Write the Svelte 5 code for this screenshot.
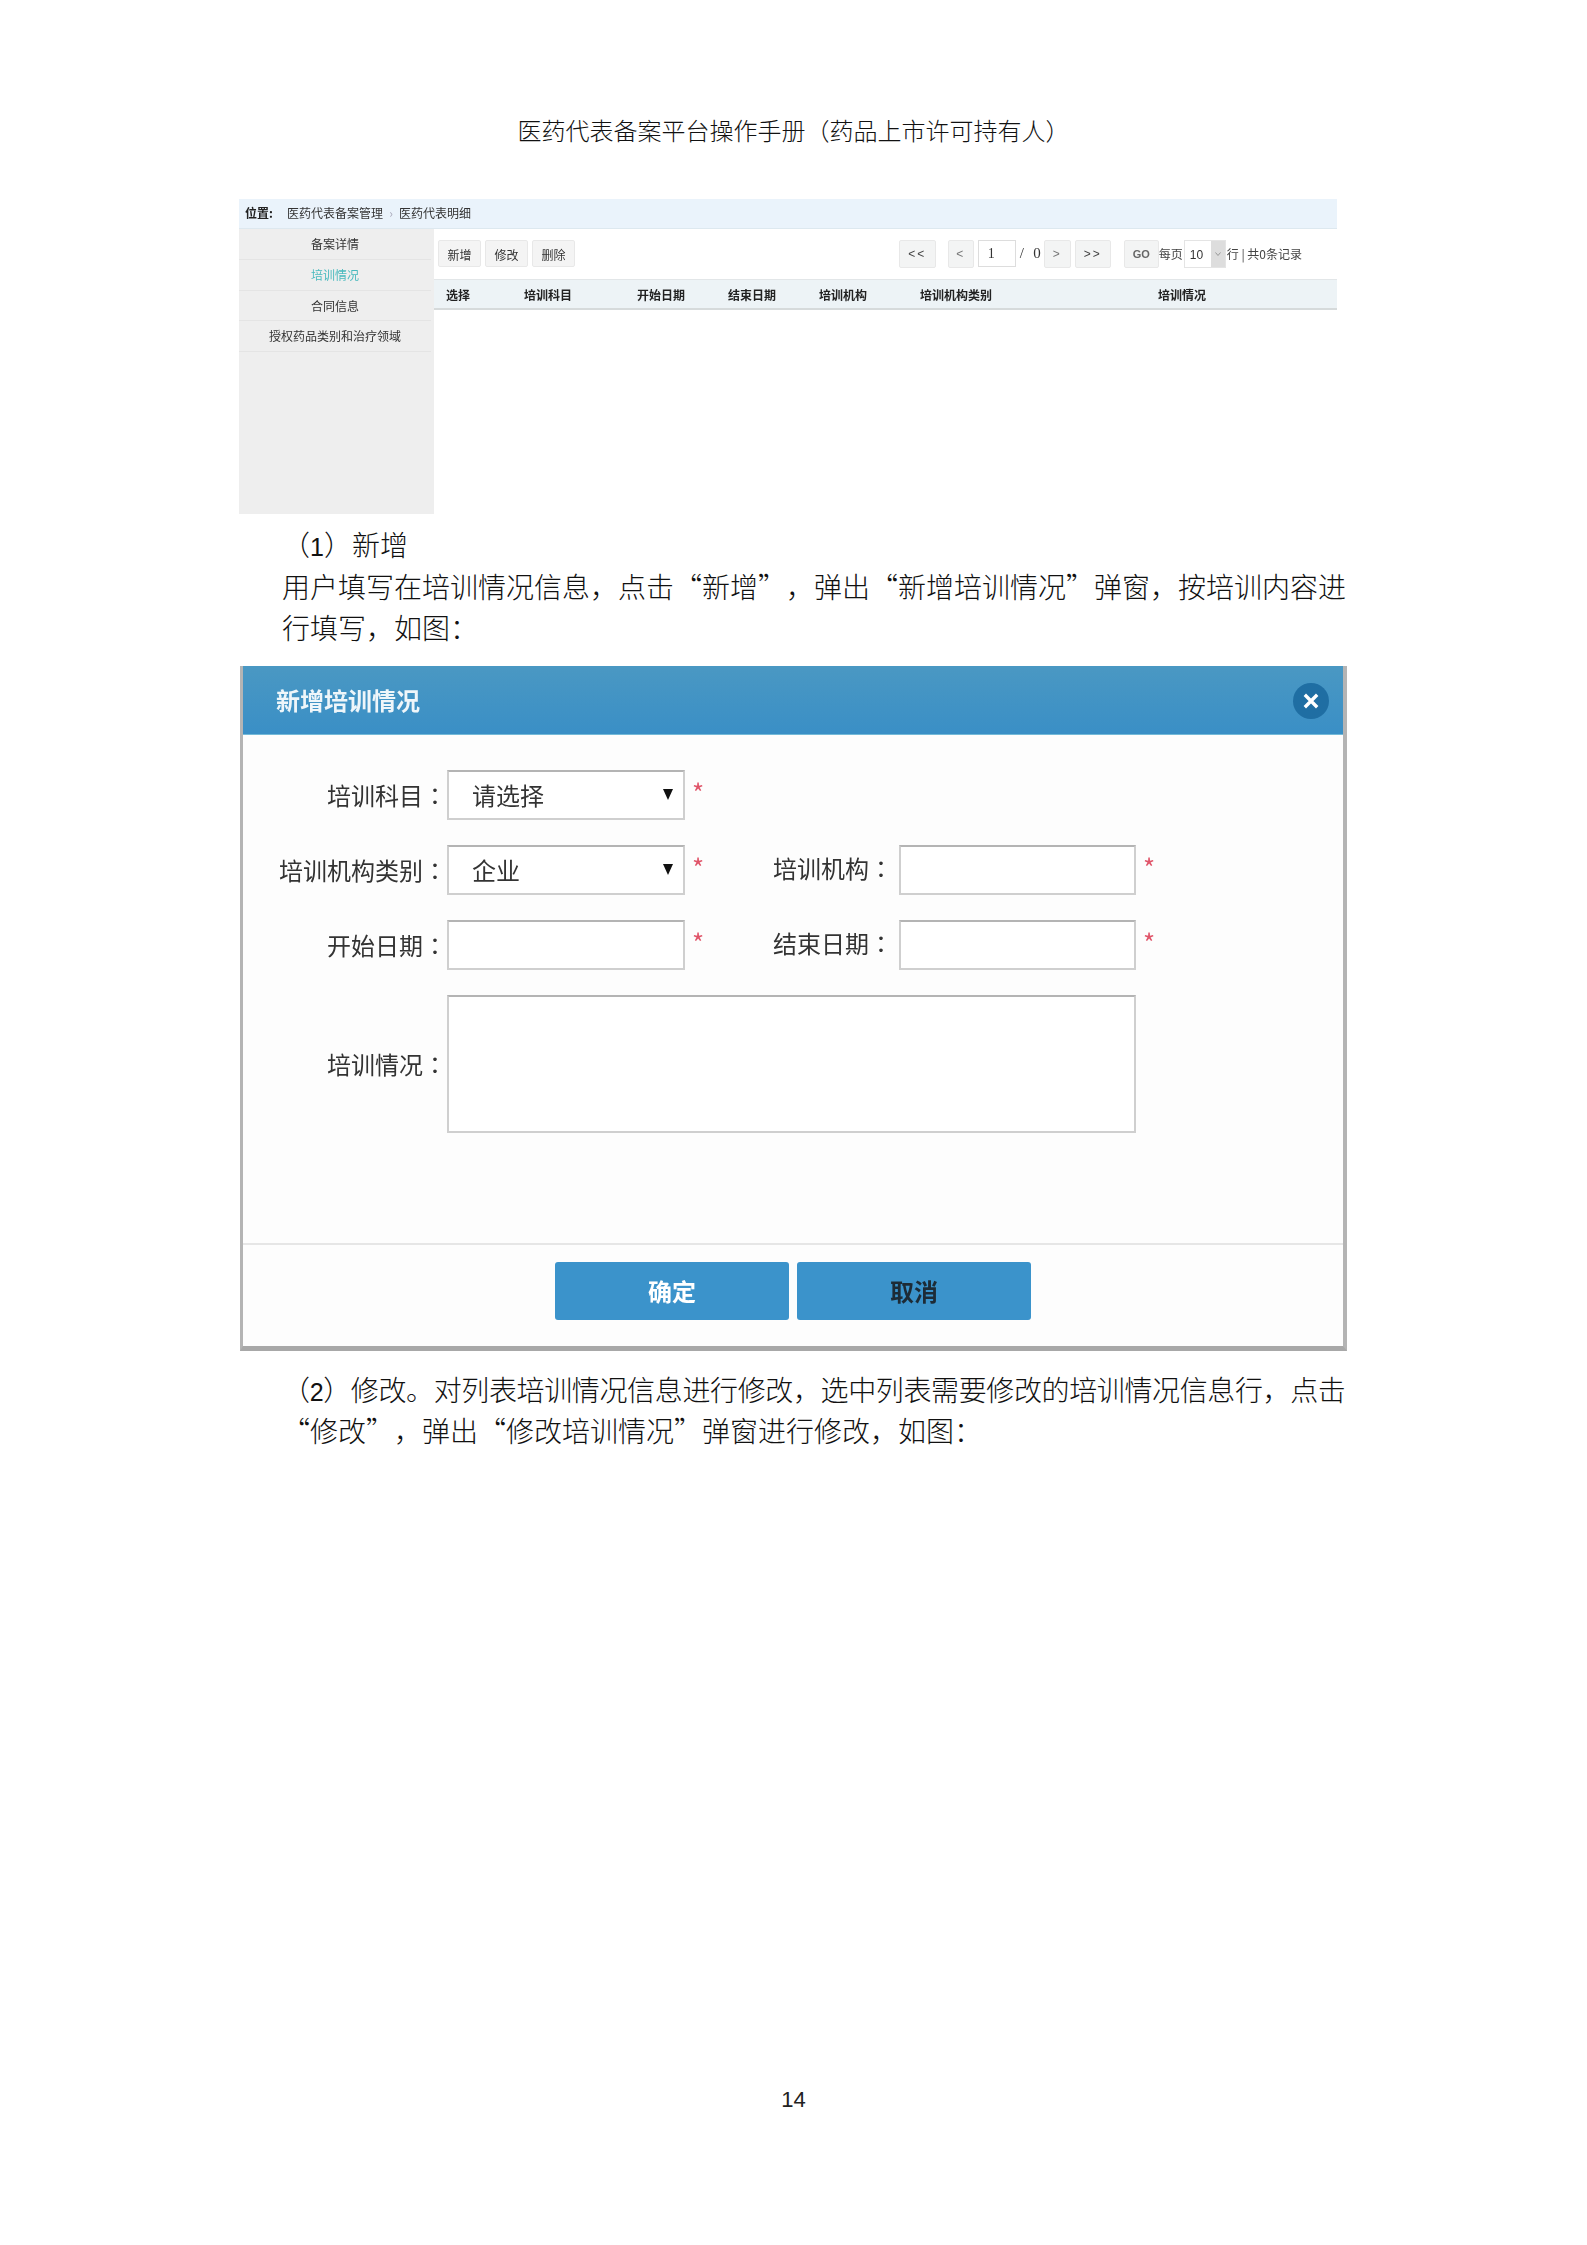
<script lang="ts">
  const navItems = [
    { label: '备案详情', active: false },
    { label: '培训情况', active: true },
    { label: '合同信息', active: false },
    { label: '授权药品类别和治疗领域', active: false }
  ];
  const columns = ['选择', '培训科目', '开始日期', '结束日期', '培训机构', '培训机构类别', '培训情况'];
</script>

<div class="page">
  <header class="doc-title">医药代表备案平台操作手册（药品上市许可持有人）</header>

  <section class="shot list-shot">
    <div class="crumbs">
      <b>位置:</b>
      <span class="crumb-a">医药代表备案管理</span>
      <span class="crumb-sep">›</span>
      <span>医药代表明细</span>
    </div>
    <div class="list-body">
      <nav class="side">
        {#each navItems as item}
          <div class="side-item" class:active={item.active}>{item.label}</div>
        {/each}
      </nav>
      <div class="list-main">
        <div class="toolbar">
          <div class="tool-group">
            <button class="tool">新增</button>
            <button class="tool">修改</button>
            <button class="tool">删除</button>
          </div>
          <div class="pager">
            <button class="pg first">&lt;&lt;</button>
            <button class="pg prev">&lt;</button>
            <div class="pg-input">1</div>
            <span class="pg-total">/&nbsp;&nbsp;0</span>
            <button class="pg next">&gt;</button>
            <button class="pg last">&gt;&gt;</button>
            <button class="pg go">GO</button>
            <span class="pg-text">每页</span>
            <div class="pg-size">
              <span class="size-val">10</span>
              <span class="size-arrow">
                <svg viewBox="0 0 8 6" width="8" height="6"><path d="M1.500 1.500 4 4.500 6.500 1.500" stroke="#999" stroke-width="1" fill="none" /></svg>
              </span>
            </div>
            <span class="pg-text">行 | 共0条记录</span>
          </div>
        </div>
        <div class="thead">
          {#each columns as col}
            <div>{col}</div>
          {/each}
        </div>
      </div>
    </div>
  </section>

  <section class="para first-para">
    <div class="line">（<span class="num">1</span>）新增</div>
    <div class="line">用户填写在培训情况信息，点击“新增”，弹出“新增培训情况”弹窗，按培训内容进</div>
    <div class="line">行填写，如图：</div>
  </section>

  <section class="shot dialog">
    <div class="dlg-head">
      <span class="dlg-title">新增培训情况</span>
      <span class="dlg-close">
        <svg viewBox="0 0 16 16" width="18" height="18"><path d="M2.500 2.500 13.500 13.500M13.500 2.500 2.500 13.500" stroke="#fff" stroke-width="3" fill="none" /></svg>
      </span>
    </div>
    <div class="dlg-form">
      <label class="lbl">培训科目<span class="colon">：</span></label>
      <div class="field select">请选择<i class="tri"></i></div>
      <span class="star">*</span>
      <span class="blank"></span>
      <span class="blank"></span>
      <span class="blank"></span>

      <label class="lbl">培训机构类别<span class="colon">：</span></label>
      <div class="field select">企业<i class="tri"></i></div>
      <span class="star">*</span>
      <label class="lbl right">培训机构<span class="colon">：</span></label>
      <div class="field"></div>
      <span class="star">*</span>

      <label class="lbl">开始日期<span class="colon">：</span></label>
      <div class="field"></div>
      <span class="star">*</span>
      <label class="lbl right">结束日期<span class="colon">：</span></label>
      <div class="field"></div>
      <span class="star">*</span>

      <label class="lbl">培训情况<span class="colon">：</span></label>
      <div class="field area"></div>
    </div>
    <div class="dlg-foot">
      <button class="dlg-btn ok">确定</button>
      <button class="dlg-btn cancel">取消</button>
    </div>
  </section>

  <section class="para second-para">
    <div class="line tight">（<span class="num">2</span>）修改。对列表培训情况信息进行修改，选中列表需要修改的培训情况信息行，点击</div>
    <div class="line">“修改”，弹出“修改培训情况”弹窗进行修改，如图：</div>
  </section>

  <footer class="page-no">14</footer>
</div>

<style>
  :global(body) {
    margin: 0;
    background: #fff;
  }

  .page {
    width: 1587px;
    height: 2245px;
    box-sizing: border-box;
    padding-top: 113px;
    display: flex;
    flex-direction: column;
    font-family: "Noto Sans CJK SC", "Liberation Sans", sans-serif;
    color: #222;
    overflow: hidden;
  }

  .doc-title {
    font-size: 24px;
    line-height: 34px;
    text-align: center;
    margin-bottom: 52px;
    font-weight: 300;
    color: #111;
    text-spacing-trim: space-all;
  }

  .shot {
    filter: blur(0.35px);
  }

  /* list screenshot */
  .list-shot {
    margin-left: 239px;
    width: 1098px;
    height: 315px;
    display: flex;
    flex-direction: column;
    font-size: 12px;
    color: #333;
  }

  .crumbs {
    height: 30px;
    flex: none;
    display: flex;
    align-items: center;
    padding: 0 0 2px 6px;
    background: #eaf3fb;
    border-bottom: 1px solid #dde8ef;
    box-sizing: border-box;
  }

  .crumbs b {
    width: 42px;
    color: #222;
  }

  .crumb-sep {
    width: 16px;
    text-align: center;
    color: #aab;
  }

  .list-body {
    flex: 1;
    display: flex;
    min-height: 0;
  }

  .side {
    width: 195px;
    flex: none;
    background: #eee;
  }

  .side-item {
    height: 30.800px;
    line-height: 29px;
    text-align: center;
    margin-right: 3px;
    border-bottom: 1px solid #e4e4e4;
    box-sizing: border-box;
  }

  .side-item.active {
    color: #48b9bd;
  }

  .list-main {
    flex: 1;
    min-width: 0;
  }

  .toolbar {
    height: 50px;
    display: flex;
    align-items: flex-start;
    justify-content: space-between;
    padding: 11px 35px 0 4px;
    box-sizing: border-box;
  }

  .tool-group {
    display: flex;
    gap: 4px;
  }

  button {
    font-family: inherit;
    padding: 0;
  }

  .tool {
    width: 43px;
    height: 27px;
    padding-top: 1px;
    font-size: 12px;
    color: #333;
    background: #f4f4f4;
    border: 1px solid #e8e8e8;
    border-radius: 2px;
  }

  .pager {
    display: flex;
    align-items: flex-start;
    line-height: 27px;
  }

  .pg {
    height: 28px;
    background: #f3f4f4;
    border: 1px solid #e8e8e8;
    border-radius: 2px;
    font-family: "Liberation Sans", sans-serif;
    font-size: 12px;
    letter-spacing: 2px;
    color: #444;
  }

  .first { width: 37px; margin-right: 12px; }
  .prev { width: 26px; margin-right: 4px; color: #777; }
  .next { width: 27px; margin-right: 4px; color: #777; }
  .last { width: 36px; margin-right: 13px; }
  .go { width: 35px; font-weight: bold; font-size: 11px; color: #666; letter-spacing: 0; }

  .pg-input {
    width: 38px;
    height: 27px;
    box-sizing: border-box;
    border: 1px solid #ddd;
    font-family: "Liberation Serif", serif;
    font-size: 14px;
    line-height: 25px;
    padding-left: 9px;
  }

  .pg-total {
    width: 28px;
    padding-left: 4px;
    box-sizing: border-box;
    font-family: "Liberation Serif", serif;
    font-size: 15px;
    word-spacing: 1px;
    white-space: nowrap;
  }

  .pg-text {
    white-space: nowrap;
    font-size: 12px;
    color: #444;
  }

  .pg-size {
    width: 42px;
    height: 28px;
    margin: 0 1px;
    display: flex;
    box-sizing: border-box;
    border: 1px solid #e4e4e4;
    font-family: "Liberation Sans", sans-serif;
    font-size: 12px;
  }

  .size-val {
    flex: 1;
    padding-left: 5px;
    line-height: 28px;
  }

  .size-arrow {
    width: 14px;
    background: #ddd;
    display: flex;
    align-items: center;
    justify-content: center;
  }

  .thead {
    height: 31px;
    display: grid;
    grid-template-columns: 78px 113px 91px 91px 101px 238px 1fr;
    padding-left: 12px;
    align-items: center;
    font-weight: bold;
    color: #222;
    background: #edf3f6;
    border-top: 1px solid #e2e6e8;
    border-bottom: 2px solid #d6dadb;
    box-sizing: border-box;
  }

  /* body paragraphs */
  .para {
    margin-left: 282px;
    width: 1064px;
    font-size: 28px;
    line-height: 41.500px;
    font-weight: 300;
    color: #111;
    text-spacing-trim: space-all;
  }

  .first-para {
    margin-top: 10px;
    margin-bottom: 17px;
  }

  .second-para {
    margin-top: 18px;
  }

  .line {
    white-space: nowrap;
  }

  .line.tight {
    letter-spacing: -0.370px;
  }

  .num {
    font-family: "Liberation Sans", sans-serif;
    font-size: 25px;
    font-weight: 400;
    line-height: 0;
  }

  /* dialog screenshot */
  .dialog {
    margin-left: 240px;
    width: 1107px;
    height: 685px;
    box-sizing: border-box;
    display: flex;
    flex-direction: column;
    background: #fdfdfd;
    border-left: 3px solid #b4b4b4;
    border-right: 4px solid #b4b4b4;
    border-bottom: 5px solid #a8a8a8;
    font-size: 24px;
    color: #333;
  }

  .dlg-head {
    height: 69px;
    flex: none;
    display: flex;
    align-items: center;
    justify-content: space-between;
    padding: 0 14px 0 33px;
    box-sizing: border-box;
    background: linear-gradient(#4a98c3, #3a8fc6);
    border-bottom: 1px solid #74bad8;
    color: #eef6fa;
  }

  .dlg-title {
    font-weight: bold;
  }

  .dlg-close {
    width: 36px;
    height: 36px;
    margin-top: 2px;
    border-radius: 50%;
    background: #1f6ea3;
    display: flex;
    align-items: center;
    justify-content: center;
  }

  .dlg-form {
    height: 510px;
    flex: none;
    box-sizing: border-box;
    padding-top: 35px;
    display: grid;
    grid-template-columns: 204px 238px 89px 125px 237px 1fr;
    grid-template-rows: 50px 50px 50px 138px;
    row-gap: 25px;
    border-bottom: 2px solid #e6e6e6;
  }

  .lbl {
    display: flex;
    align-items: center;
    justify-content: flex-end;
    white-space: nowrap;
  }

  .lbl.right {
    padding-right: 6px;
    padding-bottom: 4px;
  }

  .colon {
    font-family: "Noto Sans CJK TC", sans-serif;
  }

  .field {
    box-sizing: border-box;
    background: #fff;
    border: 2px solid #cfcfcf;
    border-top-color: #b4b4b4;
  }

  .select {
    display: flex;
    align-items: center;
    justify-content: space-between;
    padding: 0 10px 0 23px;
  }

  .tri {
    width: 0;
    height: 0;
    border-left: 5px solid transparent;
    border-right: 5px solid transparent;
    border-top: 11px solid #111;
  }

  .star {
    color: #e0556a;
    font-size: 26px;
    line-height: 36px;
    padding: 4px 0 0 7px;
  }

  .area {
    grid-column: 2 / span 4;
    width: 689px;
  }

  .dlg-foot {
    flex: 1;
    display: flex;
    justify-content: center;
    gap: 8px;
    padding: 17px 0 0 0;
    box-sizing: border-box;
  }

  .dlg-btn {
    width: 234px;
    height: 58px;
    border: none;
    border-radius: 3px;
    background: #3b93cb;
    font-size: 24px;
    font-weight: bold;
  }

  .ok { color: #fff; }
  .cancel { color: #1d2b36; }

  .page-no {
    margin-top: auto;
    margin-bottom: 130px;
    text-align: center;
    font-family: "Liberation Sans", sans-serif;
    font-size: 22px;
    line-height: 30px;
    color: #222;
  }
</style>
